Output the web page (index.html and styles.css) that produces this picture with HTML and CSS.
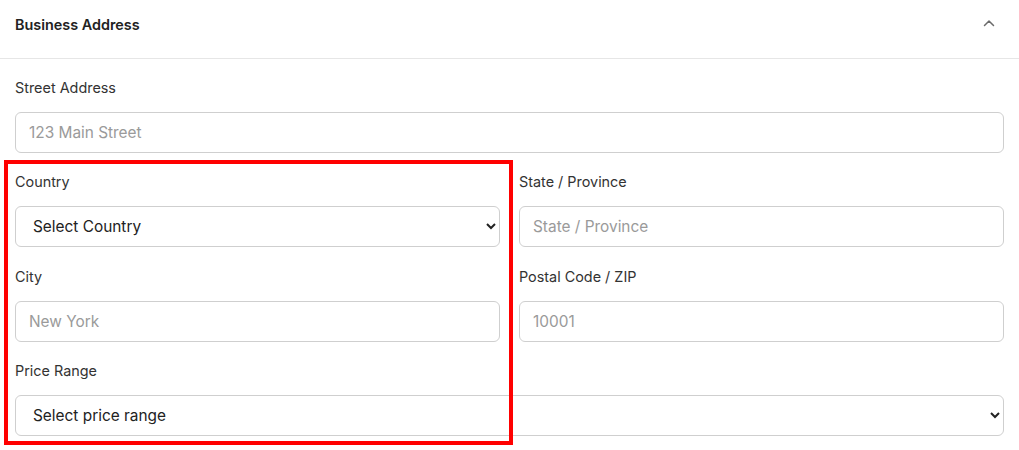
FILE: index.html
```html
<!DOCTYPE html>
<html lang="en">
<head>
<meta charset="utf-8">
<title>Business Address</title>
<link rel="stylesheet" href="styles.css">
</head>
<body>
<section class="panel">
  <header class="panel-head">
    <h2 class="panel-title">Business Address</h2>
    <svg class="chev" width="12" height="8" viewBox="0 0 12 8" aria-hidden="true"><path d="M1.5 6.5 L6 2 L10.5 6.5" fill="none" stroke="#6b6b6b" stroke-width="1.5" stroke-linecap="round" stroke-linejoin="round"/></svg>
  </header>
  <div class="panel-body">
    <div class="field">
      <label class="label">Street Address</label>
      <input class="control" type="text" placeholder="123 Main Street">
    </div>
    <div class="grid">
      <div class="field">
        <label class="label">Country</label>
        <select class="control select"><option>Select Country</option></select>
      </div>
      <div class="field">
        <label class="label">State / Province</label>
        <input class="control" type="text" placeholder="State / Province">
      </div>
      <div class="field">
        <label class="label">City</label>
        <input class="control" type="text" placeholder="New York">
      </div>
      <div class="field">
        <label class="label">Postal Code / ZIP</label>
        <input class="control" type="text" placeholder="10001">
      </div>
    </div>
    <div class="field">
      <label class="label">Price Range</label>
      <select class="control select"><option>Select price range</option></select>
    </div>
  </div>
  <div class="highlight"></div>
</section>
</body>
</html>
```
FILE: styles.css
```css
* { box-sizing: border-box; }
html, body { margin: 0; padding: 0; background: #fff; }
body { font-family: Inter, "Noto Sans", sans-serif; color: #333; min-height: 450px; }
.panel { position: relative; width: 1019px; min-height: 450px; }
.panel-head {
  height: 59px;
  padding: 15px 24px 0 15px;
  border-bottom: 1px solid #e6e6e6;
  display: flex;
  justify-content: space-between;
  align-items: flex-start;
}
.panel-title { margin: 0; font-size: 14.4px; line-height: 20px; font-weight: 600; color: #222; }
.chev { margin-top: 4px; }
.panel-body { padding: 19px 15px 0 15px; display: flex; flex-direction: column; gap: 19px; }
.grid { display: grid; grid-template-columns: 1fr 1fr; column-gap: 19px; row-gap: 20px; }
.field { display: flex; flex-direction: column; }
.label { font-size: 14.4px; line-height: 20px; color: #333; margin-bottom: 14px; }
.control {
  height: 41px;
  width: 100%;
  border: 1px solid #cfcfcf;
  border-radius: 6px;
  padding: 0 13px;
  font-family: Inter, "Noto Sans", sans-serif;
  font-size: 15.4px;
  color: #222;
  background: #fff;
  outline: none;
}
.control::placeholder { color: #9a9a9a; }
.select { padding: 0 10px 0 13px; }
.highlight {
  position: absolute;
  left: 4px; top: 160px;
  width: 509px; height: 285px;
  border: 4px solid #ff0000;
  pointer-events: none;
}
```
